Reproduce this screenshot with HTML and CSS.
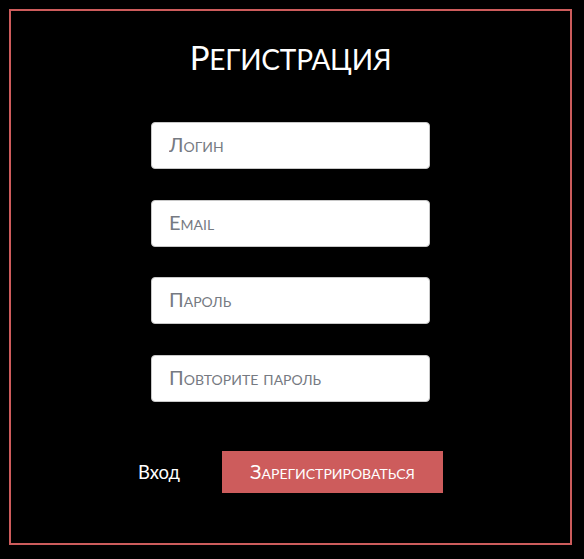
FILE: index.html
```html
<!DOCTYPE html>
<html lang="ru">
<head>
<meta charset="utf-8">
<title>Регистрация</title>
<link rel="stylesheet" href="styles.css">
</head>
<body>
<div class="frame">
  <form class="form">
    <h1 class="title">Регистрация</h1>
    <div class="fields">
      <input class="field" type="text" placeholder="Логин">
      <input class="field" type="email" placeholder="Email">
      <input class="field" type="password" placeholder="Пароль">
      <input class="field" type="password" placeholder="Повторите пароль">
    </div>
    <div class="actions">
      <a class="login-link" href="#">Вход</a>
      <button class="submit" type="button">Зарегистрироваться</button>
    </div>
  </form>
</div>
</body>
</html>
```
FILE: styles.css
```css
html, body {
  margin: 0;
  padding: 0;
  background: #000;
}

body {
  font-family: "Lato", "Noto Sans", sans-serif;
  color: #fff;
}

.frame {
  box-sizing: border-box;
  margin: 9px;
  width: 563px;
  height: 536px;
  border: 2px solid #cd5c5c;
}

.form {
  display: flex;
  flex-direction: column;
  align-items: center;
  padding-top: 26px;
}

.title {
  margin: 0;
  font-weight: 400;
  font-size: 28px;
  line-height: 40px;
  letter-spacing: -0.2px;
  text-transform: uppercase;
  color: #fff;
}

.title::first-letter {
  font-size: 33px;
}

.fields {
  display: flex;
  flex-direction: column;
  gap: 30.7px;
  margin-top: 43px;
}

.field {
  box-sizing: border-box;
  width: 279px;
  height: 47px;
  margin: 0;
  padding: 0 16px 3px 17px;
  border: 1px solid #c8c8c8;
  border-radius: 4px;
  background: #fff;
  font-family: "Lato", "Noto Sans", sans-serif;
  font-size: 20px;
  font-variant: small-caps;
  color: #333;
  outline: none;
}

.field::placeholder {
  color: #767a82;
  opacity: 1;
}

.actions {
  display: flex;
  align-items: center;
  gap: 42px;
  margin-top: 49px;
}

.login-link {
  font-size: 18.5px;
  color: #fff;
  text-decoration: none;
}

.submit {
  box-sizing: border-box;
  width: 221px;
  height: 42px;
  margin: 0;
  padding: 0 0 2px;
  border: none;
  background: #cd5c5c;
  color: #fff;
  font-family: "Lato", "Noto Sans", sans-serif;
  font-size: 20px;
  font-variant: small-caps;
  cursor: pointer;
}
```
